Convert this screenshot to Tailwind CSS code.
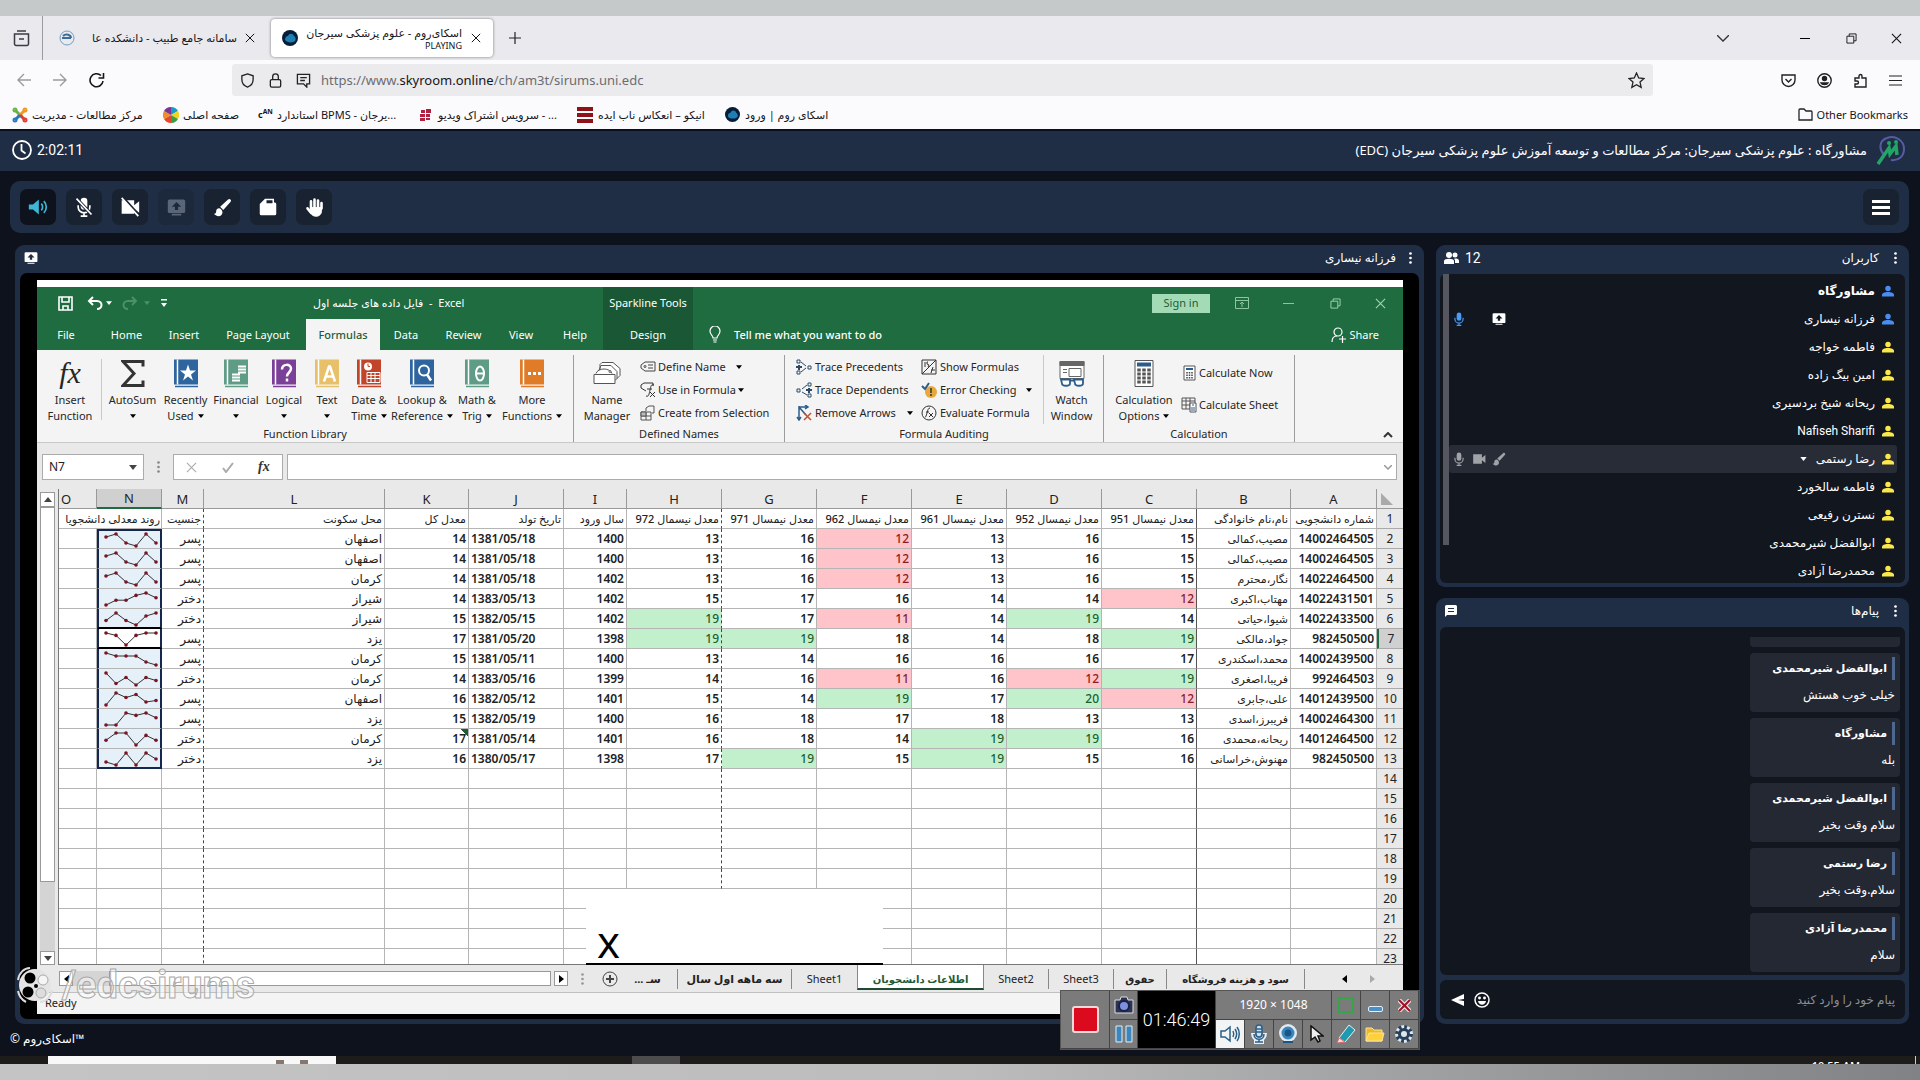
<!DOCTYPE html>
<html lang="fa">

<head>
    <meta charset="UTF-8">
    <meta name="viewport" content="width=device-width, initial-scale=1.0">
    <title>اسکای‌روم - علوم پزشکی سیرجان</title>
    <script src="https://cdn.jsdelivr.net/npm/@tailwindcss/browser@4"></script>
</head>

<body class="h-screen flex flex-col overflow-hidden relative bg-[#0e121c] font-['Noto_Sans','DejaVu_Sans',sans-serif] text-[12px] leading-4">
    <!-- shared icons -->
    <svg class="hidden">
        <symbol id="i-user" viewBox="0 0 24 24"><circle cx="12" cy="7" r="5.500" /><path d="M0 23v-3c0-4 5-6 12-6s12 2 12 6v3z" /></symbol>
        <symbol id="i-mic" viewBox="0 0 24 24"><rect x="8" y="1" width="8" height="14" rx="4" /><path d="M5 10v2a7 7 0 0 0 14 0v-2M12 19v4M8 23h8" fill="none" stroke="currentColor" stroke-width="2" /></symbol>
        <symbol id="i-brush" viewBox="0 0 24 24"><path d="M22 2c-1-1-2-1-3 0L9 11l4 4 9-10c1-1 1-2 0-3zM8 13c-3 0-4 2-4 4s-1 3-3 3c2 2 4 3 6 3 3 0 5-2 5-5 0-2-2-5-4-5z" /></symbol>
        <symbol id="i-cam" viewBox="0 0 24 24"><path d="M2 4h15v6l6-5v14l-6-5v6H2z" /></symbol>
        <symbol id="i-screen" viewBox="0 0 24 24"><path fill-rule="evenodd" d="M3 2h18a2 2 0 0 1 2 2v13a2 2 0 0 1-2 2H3a2 2 0 0 1-2-2V4a2 2 0 0 1 2-2zm9 3-6 6h4v4h4v-4h4zM6 20h12v2H6z" /></symbol>
        <symbol id="i-dots" viewBox="0 0 6 16"><circle cx="3" cy="2" r="1.800" /><circle cx="3" cy="8" r="1.800" /><circle cx="3" cy="14" r="1.800" /></symbol>
        <symbol id="i-down" viewBox="0 0 8 5"><path d="M0 0h8L4 5z" /></symbol>
        <symbol id="i-x" viewBox="0 0 12 12"><path d="M1 1l10 10M11 1L1 11" stroke="currentColor" fill="none" stroke-width="1.2" /></symbol>
        <symbol id="i-restore" viewBox="0 0 12 12"><path d="M1 3.500h7.500V11H1zM3.500 3.500V1H11v7.500H8.500" stroke="currentColor" fill="none" /></symbol>
        <symbol id="i-sky" viewBox="0 0 16 16"><circle cx="8" cy="8" r="8" fill="#061d38" /><path d="M3 10c0-2 1-4 3-4 1-3 5-3 6 0 2 1 2 4 1 5-2 2-8 2-10-1z" fill="#1f7fb5" /></symbol>
    </svg>

    <div class="h-4 shrink-0 bg-[#c5c9ca]"></div>

    <!-- browser tabs -->
    <div class="h-11 shrink-0 bg-[#eae9ed] flex items-center text-[#15141a]">
        <button class="w-[43px] h-full border-r border-[#9a9aa0] grid place-items-center" aria-label="Firefox View">
            <svg class="size-[17px]" viewBox="0 0 17 17" fill="none" stroke="#3b3b44" stroke-width="1.500"><path d="M4 1h9M1.500 4h14v10a1.500 1.500 0 0 1-1.500 1.500H3A1.500 1.500 0 0 1 1.500 14zM6 9h5" /></svg>
        </button>
        <div class="w-[228px] pl-4 pr-[14px] flex items-center gap-[6px]">
            <svg class="size-4 shrink-0" viewBox="0 0 16 16" fill="none" stroke="#6f9fc4"><circle cx="8" cy="8" r="7" /><path d="M3 8h9M4 6c3-3 8-1 8 2" stroke="#3a6d99" stroke-width="2" /></svg>
            <div dir="rtl" class="flex-1 overflow-hidden whitespace-nowrap text-[11px]">سامانه جامع طبیب - دانشکده عا</div>
            <button aria-label="Close tab" class="px-[2px]"><svg class="size-[10px]"><use href="#i-x" /></svg></button>
        </div>
        <div class="w-[222px] h-[38px] pl-[11px] pr-[10px] flex items-center gap-[7px] bg-white rounded-[4px] shadow-[0_0_3px_rgba(0,0,0,0.5)]">
            <svg class="size-4 shrink-0"><use href="#i-sky" /></svg>
            <div class="flex-1 overflow-hidden whitespace-nowrap text-right">
                <div dir="rtl" class="text-[11px] leading-[15px]">اسکای‌روم - علوم پزشکی سیرجان</div>
                <div class="text-[9px] leading-[11px]">PLAYING</div>
            </div>
            <button aria-label="Close tab" class="px-[2px]"><svg class="size-[10px]"><use href="#i-x" /></svg></button>
        </div>
        <button class="ml-4 size-3" aria-label="New tab"><svg viewBox="0 0 12 12" stroke="#222" stroke-width="1.200"><path d="M6 0v12M0 6h12" /></svg></button>
        <div class="ml-auto flex items-center pr-[18px]">
            <button class="mr-[71px]" aria-label="List tabs"><svg class="w-3 h-[7px]" viewBox="0 0 12 7" fill="none" stroke="#333" stroke-width="1.300"><path d="M0 0l6 6 6-6" /></svg></button>
            <button class="w-[10px] h-px bg-black mr-[36px]" aria-label="Minimize"></button>
            <button class="mr-[34px]" aria-label="Restore"><svg class="size-[11px]"><use href="#i-restore" /></svg></button>
            <button aria-label="Close"><svg class="size-[11px]"><use href="#i-x" /></svg></button>
        </div>
    </div>

    <!-- address bar -->
    <div class="h-10 shrink-0 bg-[#fbfbfe] flex items-center text-[#15141a]">
        <div class="w-[232px] pl-[17px] flex items-center gap-[22px]">
            <svg class="size-[14px]" viewBox="0 0 14 14" fill="none" stroke="#9a9aa0" stroke-width="1.400"><path d="M14 7H1M7 1L1 7l6 6" /></svg>
            <svg class="size-[14px]" viewBox="0 0 14 14" fill="none" stroke="#9a9aa0" stroke-width="1.400"><path d="M0 7h13M7 1l6 6-6 6" /></svg>
            <svg class="size-4" viewBox="0 0 16 16" fill="none" stroke="#15141a" stroke-width="1.600"><path d="M14 9a6.500 6.500 0 1 1-2-5.500M14.500 1v5h-5" /></svg>
        </div>
        <div class="flex-1 h-8 bg-[#ebebed] rounded-[3px] flex items-center px-2">
            <svg class="size-[15px] mr-[13px]" viewBox="0 0 15 16" fill="none" stroke="#222" stroke-width="1.400"><path d="M7.500 1L13.500 3v4c0 4-3 7-6 8-3-1-6-4-6-8V3z" /></svg>
            <svg class="size-[15px] mr-[13px]" viewBox="0 0 15 16" fill="none" stroke="#222" stroke-width="1.400"><rect x="2" y="7" width="11" height="8" rx="1.500" /><path d="M4.500 7V4a3 3 0 0 1 6 0v3" /></svg>
            <svg class="size-[15px] mr-[10px]" viewBox="0 0 15 16" fill="none" stroke="#222" stroke-width="1.400"><path d="M1 1.500h13v10H11V15l-3.500-3.500H1zM4 5h7M4 8h5" /></svg>
            <div class="text-[13px] text-[#6b6b73]">https://www.<span class="text-[#15141a]">skyroom.online</span>/ch/am3t/sirums.uni.edc</div>
            <svg class="size-[17px] ml-auto" viewBox="0 0 17 17" fill="none" stroke="#222" stroke-width="1.300"><path d="M8.500 1l2.200 4.900 5.300.6-4 3.600 1.200 5.300-4.700-2.700-4.700 2.700L5 10.100 1 6.500l5.300-.6z" /></svg>
        </div>
        <div class="w-[267px] flex items-center justify-end gap-[21px] pr-[18px]">
            <svg class="size-[15px]" viewBox="0 0 15 15" fill="none" stroke="#222" stroke-width="1.400"><path d="M1 2h13v5a6.500 6.500 0 0 1-13 0zM4.500 6l3 3 3-3" /></svg>
            <svg class="size-[15px]" viewBox="0 0 15 15" fill="none" stroke="#222" stroke-width="1.400"><circle cx="7.500" cy="7.500" r="6.700" /><circle cx="7.500" cy="5.500" r="2" fill="#222" /><path d="M4 10h7c-1 2-6 2-7 0z" fill="#222" /></svg>
            <svg class="size-[15px]" viewBox="0 0 15 15" fill="none" stroke="#222" stroke-width="1.400"><path d="M2 5h4V3a1.500 1.500 0 0 1 3 0v2h4v9H2v-3h2a1.500 1.500 0 0 0 0-3H2z" /></svg>
            <svg class="w-[13px] h-[11px]" viewBox="0 0 13 11" stroke="#222" stroke-width="1.200"><path d="M0 1h13M0 5.500h13M0 10h13" /></svg>
        </div>
    </div>

    <!-- bookmarks -->
    <nav class="h-[29px] shrink-0 bg-[#fbfbfe] flex items-center px-3 text-[11px] whitespace-nowrap text-[#15141a]">
        <a href="#" class="w-[151px] flex items-center gap-1">
            <svg class="size-4 shrink-0" viewBox="0 0 16 16" fill="none" stroke-width="3"><path d="M3 3l7 7" stroke="#6ab344" /><path d="M13 3l-7 7" stroke="#f09a24" /><path d="M8 8l5 5" stroke="#e0402c" /><path d="M8 8l-5 5" stroke="#2a78c0" /><circle cx="3" cy="3" r="1" stroke="#6ab344" /><circle cx="13" cy="3" r="1" stroke="#f09a24" /><circle cx="13" cy="13" r="1" stroke="#e0402c" /><circle cx="3" cy="13" r="1" stroke="#2a78c0" /></svg>
            <span dir="rtl">مرکز مطالعات - مدیریت</span></a>
        <a href="#" class="w-[95px] flex items-center gap-1">
            <svg class="size-4 shrink-0" viewBox="0 0 16 16"><path d="M8 8V0a8 8 0 0 1 7 4z" fill="#1c9ac4" /><path d="M8 8l7-4a8 8 0 0 1 0 8z" fill="#f2d31b" /><path d="M8 8l7 4a8 8 0 0 1-7 4z" fill="#36a046" /><path d="M8 8v8a8 8 0 0 1-7-4z" fill="#e8452c" /><path d="M8 8l-7 4a8 8 0 0 1 0-8z" fill="#ef8f2a" /><path d="M8 8L1 4a8 8 0 0 1 7-4z" fill="#7a3594" /></svg>
            <span dir="rtl">صفحه اصلی</span></a>
        <a href="#" class="w-[162px] flex items-center gap-1">
            <span class="font-bold text-[9px] leading-3 w-[15px]">c<sup>AN</sup></span>
            <span dir="rtl">...یرجان - BPMS استاندارد</span></a>
        <a href="#" class="w-[157px] flex items-center gap-[7px]">
            <svg class="w-[11px] h-3 shrink-0" viewBox="0 0 11 12" fill="#b3203f"><path d="M1 1h4v3H1zM6 0h5v4H6zM0 5h5v3H0zM6 5h4v3H6zM0 9h5v3H0zM6 9h4v2H6z" /></svg>
            <span dir="rtl">... - سرویس اشتراک ویدیو</span></a>
        <a href="#" class="w-[148px] flex items-center gap-[5px]">
            <svg class="size-4 shrink-0" viewBox="0 0 16 16" fill="#8f1218"><path d="M0 0h16v4H0zM0 6h16v4H0zM0 12h16v4H0z" /></svg>
            <span dir="rtl">انیکو – انعکاس ناب ایده</span></a>
        <a href="#" class="flex items-center gap-[5px]"><svg class="size-[15px]" viewBox="0 0 16 16"><use href="#i-sky" /></svg><span dir="rtl">اسکای روم | ورود</span></a>
        <a href="#" class="ml-auto flex items-center gap-1"><svg class="size-[15px]" viewBox="0 0 15 15" fill="none" stroke="#222" stroke-width="1.300"><path d="M1 3a1 1 0 0 1 1-1h4l2 2h5a1 1 0 0 1 1 1v8H1z" /></svg>Other Bookmarks</a>
    </nav>

    <!-- room header -->
    <header class="h-[42px] shrink-0 bg-[#1f2d45] border-t-2 border-[#0a1020] flex items-center pl-3 pr-[14px] pb-[3px] text-white">
        <svg class="size-5 mr-[5px]" viewBox="0 0 20 20" fill="none" stroke="#fff" stroke-width="1.800"><circle cx="10" cy="10" r="9" /><path d="M9.500 4v6.500l4 3" /></svg>
        <span class="text-[14px] font-['Roboto']">2:02:11</span>
        <h1 dir="rtl" class="ml-auto text-[13px] whitespace-nowrap">مشاورگاه : علوم پزشکی سیرجان: مرکز مطالعات و توسعه آموزش علوم پزشکی سیرجان (EDC)</h1>
        <svg class="size-[30px] ml-[9px]" viewBox="0 0 30 30" fill="none"><path d="M8 20C2 13 4 5 11 3c8-3 17 2 17 11 0 7-5 12-13 11" stroke="#5a5aa5" stroke-width="2" /><path d="M2 29L13 13l1 6 6-8 1 9" stroke="#22a565" stroke-width="3.500" /><circle cx="13" cy="8" r="2" fill="#22a565" /><circle cx="20" cy="7" r="2" fill="#22a565" /></svg>
    </header>

    <!-- tools -->
    <div class="mt-[10px] ml-[10px] mr-[11px] h-[52px] shrink-0 rounded-[10px] bg-[#1f2d45] flex items-center gap-[10px] px-[10px] text-white">
        <button aria-label="Speaker" class="size-9 rounded-[7px] bg-[#0e121c] grid place-items-center"><svg class="size-5" viewBox="0 0 24 24" fill="#3fb6d8"><path d="M1 9v6h5l7 6V3L6 9z" /><path d="M16 8c2 2 2 6 0 8M19 5c4 4 4 10 0 14" fill="none" stroke="#3fb6d8" stroke-width="2" /></svg></button>
        <button aria-label="Microphone" class="size-9 rounded-[7px] bg-[#182231] grid place-items-center"><svg class="size-5" viewBox="0 0 24 24" fill="#fff"><use href="#i-mic" /><path d="M3 2l18 19" stroke="#182231" stroke-width="4" /><path d="M3 2l18 19" stroke="#fff" stroke-width="2" /></svg></button>
        <button aria-label="Webcam" class="size-9 rounded-[7px] bg-[#182231] grid place-items-center"><svg class="size-5" viewBox="0 0 24 24" fill="#fff"><use href="#i-cam" /><path d="M4 1l19 21" stroke="#182231" stroke-width="3" /><path d="M2 1l20 22" stroke="#fff" stroke-width="2" /></svg></button>
        <button aria-label="Share screen" class="size-9 rounded-[7px] bg-[#1c283b] grid place-items-center"><svg class="size-[19px]" fill="#5a6577"><use href="#i-screen" /></svg></button>
        <button aria-label="Whiteboard" class="size-9 rounded-[7px] bg-[#182231] grid place-items-center"><svg class="size-[19px]" fill="#fff"><use href="#i-brush" /></svg></button>
        <button aria-label="Files" class="size-9 rounded-[7px] bg-[#182231] grid place-items-center"><svg class="size-[18px]" viewBox="0 0 24 24" fill="#fff"><path fill-rule="evenodd" d="M8 1h12v5h1a2 2 0 0 1 2 2v13a2 2 0 0 1-2 2H3a2 2 0 0 1-2-2V8zm2 2v4h8V3z" /></svg></button>
        <button aria-label="Raise hand" class="size-9 rounded-[7px] bg-[#182231] grid place-items-center"><svg class="size-[21px]" viewBox="0 0 24 24" fill="none" stroke="#fff" stroke-width="3" stroke-linecap="round"><path d="M8 13V5M12 12V3M16 12V4M20 13V7M4 13l4 5" /><path d="M8 12h12v4c0 7-9 8-12 3z" fill="#fff" stroke-width="1" /></svg></button>
        <button aria-label="Menu" class="size-9 ml-auto rounded-[7px] bg-[#182231] grid place-items-center"><svg class="w-[18px] h-[15px]" viewBox="0 0 18 15" fill="#fff"><path d="M0 0h18v3H0zM0 6h18v3H0zM0 12h18v3H0z" /></svg></button>
    </div>

    <main class="mt-3 ml-[15px] mr-[11px] flex-1 min-h-0 flex gap-3">
        <!-- shared screen -->
        <section class="flex-1 min-w-0 flex flex-col bg-[#1f2d45] rounded-[9px] px-[5px] pb-[5px]">
            <div class="h-7 shrink-0 flex items-center pl-1 pr-[6px] pb-[3px] text-white">
                <svg class="size-[14px]" fill="#fff"><use href="#i-screen" /></svg>
                <span dir="rtl" class="ml-auto mr-3">فرزانه نیساری</span>
                <svg class="w-[5px] h-3" fill="#fff"><use href="#i-dots" /></svg>
            </div>
            <div class="flex-1 min-h-0 bg-black rounded-[7px] pt-[7px] pb-[5px] pl-[17px] pr-4">
                <div class="h-full flex flex-col bg-[#e9e9e9] text-[#222]">
                    <div class="h-[7px] shrink-0 bg-white"></div>
                    <!-- excel title -->
                    <div class="h-[63px] shrink-0 bg-[#1e6c40] text-white relative flex flex-col text-[11px]">
                        <div class="h-8 flex items-center pl-[21px] pr-[17px]">
                            <svg class="size-[15px] mr-[14px] shrink-0" viewBox="0 0 15 15" fill="none" stroke="#fff" stroke-width="1.600"><path d="M1 1h13v13H1zM4 1v5h7V1M5 14v-4h5v4" /></svg>
                            <svg class="w-4 h-[14px] mr-[3px]" viewBox="0 0 16 14" fill="none" stroke="#fff" stroke-width="2"><path d="M2 5h8c6 0 6 8 0 8M6 1L2 5l4 4" /></svg>
                            <svg class="w-[6px] h-1 mr-[10px]" fill="#fff" viewBox="0 0 8 5"><path d="M0 0h8L4 5z" /></svg>
                            <svg class="w-4 h-[14px] mr-[6px]" viewBox="0 0 16 14" fill="none" stroke="#4d9069" stroke-width="2"><path d="M14 5H6c-6 0-6 8 0 8M10 1l4 4-4 4" /></svg>
                            <svg class="w-[6px] h-1 mr-[11px]" fill="#4d9069" viewBox="0 0 8 5"><path d="M0 0h8L4 5z" /></svg>
                            <svg class="w-[6px] h-2" fill="#fff" viewBox="0 0 6 8"><path d="M0 0h6v1.500H0zM0 4h6L3 8z" /></svg>
                            <div class="w-[436px] pl-[146px] whitespace-nowrap"><bdi dir="rtl">فایل داده های جلسه اول</bdi>&nbsp; - &nbsp;Excel</div>
                            <div class="w-[90px] text-center whitespace-nowrap relative z-10">Sparkline Tools</div>
                            <button class="ml-auto w-[58px] h-[19px] bg-[#a3dbb7] text-[#1e5c38]">Sign in</button>
                            <svg class="w-[14px] h-3 ml-[25px]" viewBox="0 0 14 12" fill="none" stroke="#8fc4a3"><path d="M.5.500h13v11H.5zM0 3.500h14M7 10V5M5 7l2-2 2 2" /></svg>
                            <span class="w-[11px] h-px bg-[#8fc4a3] ml-[34px]"></span>
                            <svg class="size-[11px] ml-[36px] text-[#a5d3b6]"><use href="#i-restore" /></svg>
                            <svg class="size-[11px] ml-[34px] text-[#a5d3b6]"><use href="#i-x" /></svg>
                        </div>
                        <div class="flex-1 flex items-stretch relative z-10 whitespace-nowrap text-center">
                            <button class="w-[58px]">File</button>
                            <button class="w-[63px]">Home</button>
                            <button class="w-[52px]">Insert</button>
                            <button class="w-[96px]">Page Layout</button>
                            <button class="w-[74px] bg-[#f4f4f4] text-[#1e5c38] font-medium">Formulas</button>
                            <button class="w-[52px]">Data</button>
                            <button class="w-[63px]">Review</button>
                            <button class="w-[52px]">View</button>
                            <button class="w-[56px]">Help</button>
                            <button class="w-[90px]">Design</button>
                            <label class="flex items-center pl-4 gap-[13px] font-medium">
                                <svg class="w-3 h-[17px]" viewBox="0 0 12 17" fill="none" stroke="#fff" stroke-width="1.200"><path d="M4 12c0-3-3-3-3-7a5 5 0 0 1 10 0c0 4-3 4-3 7zM4 14h4M4.500 16h3" /></svg>Tell me what you want to do</label>
                            <button class="ml-auto mr-6 flex items-center gap-[3px]"><svg class="w-[15px] h-4" viewBox="0 0 15 16" fill="none" stroke="#fff" stroke-width="1.200"><circle cx="7" cy="5" r="4" /><path d="M1 15c0-4 2-6 5-6M8 12h7M11.500 9v7" /></svg>Share</button>
                        </div>
                        <div class="absolute left-[566px] top-0 w-[90px] h-full bg-[#1a5835]"></div>
                    </div>

                    <!-- ribbon -->
                    <div class="h-[93px] shrink-0 bg-[#f4f4f4] border-b border-[#c9c9c9] flex pt-[5px] text-[11px] text-center whitespace-nowrap text-[#262626] relative">
                        <div class="w-[537px] border-r border-[#9d9d9d] flex flex-col">
                            <div class="flex" id="library"></div>
                            <div class="mt-auto">Function Library</div>
                        </div>
                        <div class="w-[211px] border-r border-[#9d9d9d] flex flex-col">
                            <div class="flex">
                                <button class="w-[66px] flex flex-col items-center"><svg class="w-7 h-[29px] my-1" viewBox="0 0 28 28" fill="#fff" stroke="#555"><path d="M7 12V5l2-2h11l7 6v7l-5 5M5 13l3-7h10l6 6v7" /><path d="M3 14c2-6 14-6 16 0" /><path d="M1 15h21v9H1z" /><circle cx="17" cy="12" r="1" /></svg>Name<br>Manager</button>
                                <div class="text-left flex flex-col">
                                    <button class="h-[23px] flex items-center gap-[2px]"><svg class="size-4" viewBox="0 0 16 16" fill="none" stroke="#444"><path d="M5 3h10v9H5L1 9V6zM8 6h5M8 9h5" /><circle cx="5" cy="7.500" r="1" /></svg>Define Name<svg class="w-[6px] h-1 ml-2"><use href="#i-down" /></svg></button>
                                    <button class="h-[23px] flex items-center gap-[2px]"><svg class="size-4" viewBox="0 0 16 16" fill="none" stroke="#333"><path d="M6 9L1 6V3l3-2h9v3M14 3c-3-1-3 1-4 5s-1 7-4 6M7 7h5M10 10l5 5M15 10l-5 5" /></svg>Use in Formula<svg class="w-[6px] h-1"><use href="#i-down" /></svg></button>
                                    <button class="h-[23px] flex items-center gap-[2px]"><svg class="size-4" viewBox="0 0 16 16" fill="none" stroke="#555"><path d="M1 7h10v8H1zM1 11h10M6 7v8M6 6V3l3-2h5v7h-2" /><path d="M1 7h5v4H1z" fill="#bbb" /></svg>Create from Selection</button>
                                </div>
                            </div>
                            <div class="mt-auto">Defined Names</div>
                        </div>
                        <div class="w-[319px] border-r border-[#9d9d9d] flex flex-col">
                            <div class="flex">
                                <div class="w-[134px] pl-[11px] flex flex-col">
                                    <button class="h-[23px] flex items-center gap-[3px]"><svg class="size-4" viewBox="0 0 16 16" fill="none" stroke="#2c4a66"><path d="M1 1h3v3H1zM1 12h3v3H1zM12 7h3v3h-3zM5 3l5 4M5 13l5-4" /><path d="M0 8h6M3 6v5" stroke-width="2" /></svg>Trace Precedents</button>
                                    <button class="h-[23px] flex items-center gap-[3px]"><svg class="size-4" viewBox="0 0 16 16" fill="none" stroke="#2c4a66"><path d="M12 1h3v3h-3zM12 12h3v3h-3zM1 7h3v3H1zM6 7l5-4M6 10l5 3" /><path d="M10 8h6M13 6v5" stroke-width="2" /></svg>Trace Dependents</button>
                                    <button class="h-[23px] flex items-center gap-[3px]"><svg class="size-4" viewBox="0 0 16 16" fill="none" stroke="#2a5d8c" stroke-width="1.500"><path d="M3 1v13M1 12l2 3 2-3M3 2h9M9 0l3 2-3 2M3 2l7 8" /><path d="M8 8l7 7M15 8l-7 7" stroke="#c2502c" /></svg>Remove Arrows<svg class="w-[6px] h-1 ml-2"><use href="#i-down" /></svg></button>
                                </div>
                                <div class="w-[124px] pl-[2px] flex flex-col">
                                    <button class="h-[23px] flex items-center gap-[3px]"><svg class="size-4" viewBox="0 0 16 16" fill="none" stroke="#333"><path d="M1 1h14v14H1zM15 1L1 15M4 3v5M7 3H6v2l2 1-1 2M12 8l-2 6M10 11h4" /></svg>Show Formulas</button>
                                    <button class="h-[23px] flex items-center gap-[3px]"><svg class="size-4" viewBox="0 0 16 16"><circle cx="10" cy="10" r="6" fill="#e8a93a" /><path d="M10 6v5M10 12v2" stroke="#333" stroke-width="1.500" /><path d="M1 4l3 3 4-6" fill="none" stroke="#2a5d8c" stroke-width="2" /></svg>Error Checking<svg class="w-[6px] h-1 ml-[6px]"><use href="#i-down" /></svg></button>
                                    <button class="h-[23px] flex items-center gap-[3px]"><svg class="size-4" viewBox="0 0 16 16" fill="none" stroke="#333"><circle cx="8" cy="8" r="7" /><path d="M9 3c-2 0-2 2-3 5s-1 4-2 4M5 7h3M8 8l4 4M12 8l-4 4" /></svg>Evaluate Formula</button>
                                </div>
                                <button class="w-[56px] border-l border-[#c9c9c9] flex flex-col items-center"><svg class="w-7 h-[29px] my-1" viewBox="0 0 28 28" fill="none" stroke="#666"><path d="M2 2h24v17H2z" fill="#fff" /><path d="M2 2h24v4H2z" fill="#666" /><path d="M11 9h12v8H11zM5 10h4M5 13h4" /><path d="M3 20h9v4c0 3-8 3-8 0zM16 20h9v4c0 3-8 3-8 0zM12 21h4" stroke="#2a5d8c" stroke-width="1.800" fill="#fff" /></svg>Watch<br>Window</button>
                            </div>
                            <div class="mt-auto">Formula Auditing</div>
                        </div>
                        <div class="w-[191px] border-r border-[#9d9d9d] flex flex-col">
                            <div class="flex">
                                <button class="w-[77px] pl-[3px] flex flex-col items-center"><svg class="w-5 h-[29px] my-1" viewBox="0 0 20 28"><path d="M1 1h18v26H1z" fill="#fff" stroke="#555" /><path d="M3 3h14v4H3z" fill="#2a5d8c" /><path d="M5 9v15M10 9v15M15 9v15" stroke="#555" stroke-width="3.500" stroke-dasharray="3 1" /></svg>Calculation<span class="flex items-center gap-1">Options<svg class="w-[6px] h-1"><use href="#i-down" /></svg></span></button>
                                <div class="flex flex-col pt-[6px] gap-2">
                                    <button class="h-6 flex items-center gap-[2px]"><svg class="size-4" viewBox="0 0 16 16"><path d="M3 1h11v14H3z" fill="#fff" stroke="#555" /><path d="M5 3h7v2H5z" fill="#2a5d8c" /><path d="M6 7v7M8.500 7v7M11 7v7" stroke="#444" stroke-width="1.500" stroke-dasharray="1.500 1" /></svg>Calculate Now</button>
                                    <button class="h-6 flex items-center gap-[2px]"><svg class="size-4" viewBox="0 0 16 16" fill="none" stroke="#555"><path d="M1 1h13v11H1zM1 4h13M1 8h13M5 1v11M9 1v11" /><path d="M9 6h6v9H9z" fill="#fff" /><path d="M11 8h2M11 10v4M13 10v4" stroke="#2a5d8c" /></svg>Calculate Sheet</button>
                                </div>
                            </div>
                            <div class="mt-auto">Calculation</div>
                        </div>
                        <button class="ml-auto mr-[10px] mt-auto mb-1" aria-label="Collapse ribbon"><svg class="w-[10px] h-[6px]" viewBox="0 0 10 6" fill="none" stroke="#333" stroke-width="2"><path d="M1 5l4-4 4 4" /></svg></button>
                    </div>

                    <!-- formula bar -->
                    <div class="h-[46px] shrink-0 pt-[11px] pb-[9px] pl-[5px] pr-[6px] flex">
                        <div class="w-[102px] border border-[#ababab] bg-white flex items-center pr-[6px]">
                            <input aria-label="Name Box" value="N7" class="w-0 flex-1 pl-[6px] outline-none"><svg class="w-2 h-[5px]" fill="#444"><use href="#i-down" /></svg>
                        </div>
                        <svg class="w-[5px] h-3 mx-[12px] self-center" fill="#888"><use href="#i-dots" /></svg>
                        <div class="w-[110px] border border-[#ababab] bg-white flex items-center justify-around text-[#aaa]">
                            <svg class="size-[11px]"><use href="#i-x" /></svg>
                            <svg class="size-3" viewBox="0 0 12 12" fill="none" stroke="#aaa" stroke-width="2"><path d="M1 7l3 4 7-9" /></svg>
                            <span class="font-['Liberation_Serif'] italic font-bold text-[14px] text-[#333]">fx</span>
                        </div>
                        <div class="ml-1 flex-1 border border-[#ababab] bg-white flex items-center pr-1">
                            <input aria-label="Formula" class="flex-1 outline-none"><svg class="w-2 h-[5px]" viewBox="0 0 8 5" fill="none" stroke="#999" stroke-width="1.500"><path d="M0 0l4 4 4-4" /></svg>
                        </div>
                    </div>

                    <!-- sheet -->
                    <div class="flex-1 min-h-0 flex relative">
                        <div class="w-[21px] shrink-0 pt-[3px] px-[3px] flex flex-col">
                            <button aria-label="Scroll up" class="h-[15px] border border-[#999] bg-white grid place-items-center"><svg class="w-2 h-[5px]" viewBox="0 0 8 5"><path d="M0 5h8L4 0z" fill="#444" /></svg></button>
                            <div class="flex-[375] bg-white border border-[#999]"></div>
                            <div class="flex-[69] bg-[#d4d4d4]"></div>
                            <button aria-label="Scroll down" class="h-[14px] border border-[#999] bg-white grid place-items-center"><svg class="w-2 h-[5px]" fill="#444"><use href="#i-down" /></svg></button>
                        </div>
                        <div class="flex-1 overflow-hidden border-l border-b border-[#777]">
                            <table class="w-full table-fixed border-separate border-spacing-0 whitespace-nowrap font-semibold">
                                <colgroup>
                                    <col class="w-[38px]"><col class="w-[65px]"><col class="w-[42px]"><col class="w-[181px]"><col class="w-[84px]"><col class="w-[95px]"><col class="w-[63px]">
                                    <col class="w-[95px]"><col class="w-[95px]"><col class="w-[95px]"><col class="w-[95px]"><col class="w-[95px]"><col class="w-[95px]"><col class="w-[94px]"><col class="w-[86px]"><col class="w-[26px]">
                                </colgroup>
                                <thead id="head"></thead>
                                <tbody id="rows"></tbody>
                            </table>
                        </div>
                        <div class="absolute left-[549px] bottom-0 w-[297px] h-[76px] bg-white border-b-2 border-black flex items-end pl-[11px] pb-1 text-[44px] leading-9 text-black font-['Open_Sans']">x</div>
                    </div>

                    <!-- sheet tabs -->
                    <div class="h-[28px] shrink-0 border-b border-[#c0c0c0] flex items-center text-[11px] whitespace-nowrap text-center">
                        <button aria-label="Scroll left" class="ml-[22px] w-[14px] h-[15px] border border-[#999] bg-white grid place-items-center"><svg class="w-[5px] h-2" viewBox="0 0 5 8"><path d="M5 0v8L0 4z" /></svg></button>
                        <div class="w-9 h-[15px] bg-[#d4d4d4]"></div>
                        <div class="w-[442px] h-[15px] bg-white border border-[#999]"></div>
                        <button aria-label="Scroll right" class="ml-[3px] w-[14px] h-[15px] border border-[#999] bg-white grid place-items-center"><svg class="w-[5px] h-2" viewBox="0 0 5 8"><path d="M0 0v8l5-4z" /></svg></button>
                        <svg class="w-[5px] h-3 ml-3 mr-[17px]" fill="#999"><use href="#i-dots" /></svg>
                        <svg class="size-4" viewBox="0 0 16 16" fill="none" stroke="#444"><circle cx="8" cy="8" r="7" /><path d="M8 4v8M4 8h8" stroke-width="2" /></svg>
                        <button class="w-[60px] h-[20px] border-r border-[#888] font-bold">... سـ</button>
                        <button class="w-[114px] h-[20px] border-r border-[#888] font-semibold">سه ماهه اول سال</button>
                        <button class="w-[65px] h-[20px]">Sheet1</button>
                        <button class="w-[127px] h-[25px] pt-1 self-start bg-white border-x border-b-2 border-b-[#1e4a34] border-x-[#888] font-bold text-[10px] text-[#1e5c38]">اطلاعات دانشجویان</button>
                        <button class="w-[65px] h-[20px] border-r border-[#888]">Sheet2</button>
                        <button class="w-[65px] h-[20px] border-r border-[#888]">Sheet3</button>
                        <button class="w-[53px] h-[20px] border-r border-[#888] font-bold text-[10px]">حقوق</button>
                        <button class="w-[138px] h-[20px] border-r border-[#888] font-bold text-[10px]">سود و هزینه فروشگاه</button>
                        <svg class="w-[5px] h-2 ml-[37px]" viewBox="0 0 5 8"><path d="M5 0v8L0 4z" /></svg>
                        <svg class="w-[5px] h-2 ml-[23px]" viewBox="0 0 5 8" fill="#aaa"><path d="M0 0v8l5-4z" /></svg>
                    </div>
                    <div class="h-[21px] shrink-0 bg-[#f4f4f4] pl-2 text-[11px] leading-[19px]">Ready</div>
                </div>
            </div>
        </section>

        <aside class="w-[473px] flex flex-col gap-[11px] text-white">
            <!-- users -->
            <section class="h-[342px] flex flex-col bg-[#1f2d45] rounded-[9px] px-1 pb-1">
                <div class="h-[29px] shrink-0 flex items-center pl-1 pr-[7px] pb-1">
                    <svg class="w-[15px] h-3 mr-[6px]" viewBox="0 0 15 12" fill="#fff"><circle cx="5" cy="3" r="3" /><circle cx="11" cy="3" r="2.500" /><path d="M0 12V9c0-3 10-3 10 0v3zM11 11V8l-1-1c3-1 5 0 5 2v2z" /></svg>
                    <span class="text-[14px] font-['Roboto']">12</span>
                    <h2 dir="rtl" class="ml-auto mr-[14px]">کاربران</h2>
                    <svg class="w-[5px] h-3" fill="#fff"><use href="#i-dots" /></svg>
                </div>
                <div class="flex-1 min-h-0 bg-[#11161f] rounded-[6px] flex pl-[3px] pr-2">
                    <div class="w-[6px] h-[271px] bg-[#55565f]"></div>
                    <ul id="users" class="flex-1 pt-[3px]"></ul>
                </div>
            </section>
            <!-- messages -->
            <section class="flex-1 min-h-0 flex flex-col bg-[#1f2d45] rounded-[9px] px-1 pb-[5px]">
                <div class="h-[29px] shrink-0 flex items-center pl-[5px] pr-[7px] pb-1">
                    <svg class="size-3" viewBox="0 0 12 12" fill="#fff"><path fill-rule="evenodd" d="M1.500 0h9A1.500 1.500 0 0 1 12 1.500v7A1.500 1.500 0 0 1 10.500 10H2L0 12V1.500A1.500 1.500 0 0 1 1.500 0zM3 3v1h6V3zm0 3v1h6V6z" /></svg>
                    <h2 dir="rtl" class="ml-auto mr-[14px]">پیام‌ها</h2>
                    <svg class="w-[5px] h-3" fill="#fff"><use href="#i-dots" /></svg>
                </div>
                <div class="flex-1 min-h-0 bg-[#11161f] rounded-[6px] flex flex-col items-end gap-[6px] pt-[10px] pr-[5px]" id="messages">
                    <div class="w-[150px] h-[10px] bg-[#242833] rounded-b-[4px]"></div>
                </div>
                <div dir="rtl" class="mt-[5px] h-[39px] shrink-0 bg-[#11161f] rounded-[6px] flex items-center pr-[10px] pl-[11px] gap-[10px]">
                    <input aria-label="پیام" placeholder="پیام خود را وارد کنید" class="flex-1 outline-none placeholder:text-[#8b8f98]">
                    <button aria-label="Emoji"><svg class="size-4" viewBox="0 0 16 16" fill="none" stroke="#fff" stroke-width="1.500"><circle cx="8" cy="8" r="7" /><path d="M4 9c1 5 7 5 8 0z" fill="#fff" stroke="none" /><circle cx="5.500" cy="6" r=".7" fill="#fff" /><circle cx="10.500" cy="6" r=".7" fill="#fff" /></svg></button>
                    <button aria-label="Send"><svg class="w-[13px] h-3" viewBox="0 0 13 12" fill="#fff"><path d="M13 0v5L7 6l6 1v5L0 6z" /></svg></button>
                </div>
            </section>
        </aside>
    </main>

    <footer dir="rtl" class="h-8 shrink-0 pt-[7px] pl-[10px] text-left text-white">™اسکای‌روم ©</footer>

    <!-- taskbar -->
    <div class="h-2 shrink-0 bg-[#1d1c1b] flex overflow-hidden text-white">
        <div class="ml-12 w-[288px] bg-[#f8f8f8] flex justify-end gap-4 pr-7 pt-1"><span class="w-2 bg-[#85776f]"></span><span class="w-2 bg-[#85776f]"></span></div>
        <div class="ml-[296px] w-12 bg-[#4c4c4c]"></div>
        <div class="ml-auto mr-[55px] pt-[2px] text-[11px] font-medium">10:55 AM</div>
        <div class="w-px mr-1 bg-[#ccc]"></div>
    </div>
    <div class="h-4 shrink-0 bg-linear-to-r from-[#c4c4c4] via-[#bcbcbc] to-[#808285]"></div>

    <!-- watermark -->
    <div class="absolute left-4 bottom-[75px] flex items-center gap-2">
        <svg class="w-[38px] h-[38px]" viewBox="0 0 38 38"><path d="M2 14C3 7 8 2 14 2M36 24c-1 7-6 12-12 12M2 25c1 5 4 9 8 11" fill="none" stroke="#ddd" stroke-width="2" /><circle cx="19" cy="19" r="16" fill="#e4e4e4" /><circle cx="14" cy="12" r="5.500" fill="#000" /><circle cx="12" cy="26" r="5.500" fill="#000" /><circle cx="27" cy="14" r="5" fill="#f5f5f5" stroke="#aaa" /><circle cx="25" cy="27" r="5" fill="#ddd" stroke="#aaa" /><circle cx="20" cy="20" r="2" fill="#000" /></svg>
        <span class="text-[38px] leading-10 font-bold font-['Liberation_Sans_Narrow','Roboto'] text-white/50 [-webkit-text-stroke:1px_#aaa]">/edcsirums</span>
    </div>

    <!-- screen recorder -->
    <div class="absolute right-[500px] bottom-[30px] h-[60px] border border-[#555] bg-[#7b7b7b] grid grid-cols-[49px_28px_78px_repeat(7,29px)] grid-rows-[29px_29px] text-white *:grid *:place-items-center *:border-r *:border-b *:border-[#444]">
        <button class="row-span-2" aria-label="Stop"><span class="size-[27px] bg-[#dc0a1e] border-2 border-[#f0dada] rounded-[3px]"></span></button>
        <button aria-label="Snapshot"><svg class="size-5" viewBox="0 0 20 20"><path d="M1 5h5l1-3h6l1 3h5v13H1z" fill="#2b3354" stroke="#ddd" /><circle cx="10" cy="11" r="5" fill="#7d8fe0" stroke="#1a2040" stroke-width="2" /></svg></button>
        <div class="row-span-2 bg-black text-[18px] font-['Roboto'] font-light">01:46:49</div>
        <div class="col-span-4 text-[12px]">1920 × 1048</div>
        <button aria-label="Region"><span class="size-4 border-2 border-[#35a548]"></span></button>
        <button aria-label="Minimize"><span class="mt-2 w-[15px] h-[6px] bg-[#4a90c4] border border-[#e4eef6] rounded-[2px]"></span></button>
        <button aria-label="Close"><svg class="size-[13px]" viewBox="0 0 12 12" stroke="#a01428" stroke-width="2"><path d="M1 1l10 10M11 1L1 11" stroke="#eee" stroke-width="4" /><path d="M1 1l10 10M11 1L1 11" /></svg></button>
        <button class="col-start-2 row-start-2" aria-label="Pause"><svg class="w-[18px] h-[18px]" viewBox="0 0 18 18" fill="#3a87bd" stroke="#e8eef4"><path d="M1 1h6v16H1zM11 1h6v16h-6z" /></svg></button>
        <button class="bg-[#f2f4f6]" aria-label="Sound"><svg class="size-5" viewBox="0 0 20 20" fill="none" stroke="#2b5f88" stroke-width="1.500"><path d="M1 7h4l5-4v14l-5-4H1zM13 7c1 2 1 4 0 6M15 5c2 3 2 7 0 10M17 3c3 4 3 10 0 14" /></svg></button>
        <button aria-label="Mic"><svg class="size-5" viewBox="0 0 20 20" fill="#cfe0ee" stroke="#2b5f88" stroke-width="1.500"><path d="M4 9c0 9 12 9 12 0M10 15v4M5 18h10" fill="none" stroke="#e4eef6" stroke-width="4" /><rect x="7" y="1" width="6" height="12" rx="3" /><path d="M7 5h6M7 8h6M5 10c0 7 10 7 10 0M10 15v3M6 18h8" fill="none" /></svg></button>
        <button aria-label="Webcam"><svg class="size-5" viewBox="0 0 20 20"><circle cx="10" cy="9" r="9" fill="#dfeaf2" /><circle cx="10" cy="9" r="5" fill="#1b5585" stroke="#3a87bd" stroke-width="3" /><path d="M5 18h10" stroke="#1b5585" stroke-width="2" /></svg></button>
        <button aria-label="Cursor"><svg class="w-[14px] h-[18px]" viewBox="0 0 14 18" fill="#eee" stroke="#111" stroke-width="1.500"><path d="M1 1v14l4-3 3 5 2-1-2-5h5z" /></svg></button>
        <button aria-label="Pen"><svg class="size-5" viewBox="0 0 20 20" stroke="#e8f2f4"><path d="M13 1l6 5-10 12-6-4z" fill="#1d9ab0" /><path d="M3 14l6 4-8 1z" fill="#f3e3da" stroke="#d46a6a" /></svg></button>
        <button aria-label="Open folder"><svg class="size-5" viewBox="0 0 20 20" fill="#f0b823" stroke="#f7e3a0"><path d="M1 4h6l2 2h8v11H1z" /><path d="M4 9h15l-2 8H1z" fill="#ffd23c" /></svg></button>
        <button aria-label="Settings"><svg class="size-5" viewBox="0 0 20 20" fill="none"><circle cx="10" cy="10" r="9" fill="#dfe6ec" /><circle cx="10" cy="10" r="7" stroke="#27415a" stroke-width="4" stroke-dasharray="2.700 2.800" /><circle cx="10" cy="10" r="4.500" stroke="#27415a" stroke-width="3" /></svg></button>
    </div>

    <script>
        // function library buttons: width, first line, second line, book colour, glyph
        const books = [
            [49, 'Recently', 'Used', '#2f659f', '<path d="M14 5l2 6h6l-5 4 2 6-5-4-5 4 2-6-5-4h6z" fill="#fff"/>'],
            [52, 'Financial', '', '#5f9c86', '<path d="M14 7h8M14 10h8M14 13h8M8 15h8M8 18h8M8 21h8" stroke="#fff" stroke-width="2"/>'],
            [44, 'Logical', '', '#7b3f98', '<path d="M10 10c0-6 9-6 9-1 0 4-4 4-4 8M15 19v3" fill="none" stroke="#fff" stroke-width="2.500"/>'],
            [42, 'Text', '', '#e8c06a', '<path d="M9 22l5-15h1l5 15M11 17h7" fill="none" stroke="#fff" stroke-width="2.500"/>'],
            [42, 'Date &', 'Time', '#c1452b', '<circle cx="11" cy="7" r="4" fill="#fff"/><path d="M11 4v3h2" stroke="#c1452b" fill="none"/><path d="M10 13h13v10H10zM10 16h13M10 19h13M14 13v10M18 13v10" stroke="#fff" fill="none"/>'],
            [64, 'Lookup &', 'Reference', '#2f659f', '<circle cx="14" cy="11" r="5" stroke="#fff" stroke-width="2" fill="none"/><path d="M17 15l4 6" stroke="#fff" stroke-width="2.500"/>'],
            [46, 'Math &', 'Trig', '#5f9c86', '<ellipse cx="15" cy="14" rx="4" ry="7" stroke="#fff" stroke-width="2" fill="none"/><path d="M11 14h8" stroke="#fff" stroke-width="2"/>'],
            [64, 'More', 'Functions', '#e07b28', '<path d="M8 14h3M13 14h3M18 14h3" stroke="#fff" stroke-width="3"/>']
        ];
        const arrow = '<svg class="w-[6px] h-1"><use href="#i-down"/></svg>';
        let lib = `<button class="w-[64px] flex flex-col items-center pl-[2px]"><span class="h-[37px] leading-[35px] text-[30px] italic font-['Liberation_Serif']">fx</span>Insert<br>Function</button>
            <span class="w-px mr-[2px] my-1 bg-[#c9c9c9]"></span>
            <button class="w-[57px] flex flex-col items-center"><svg class="w-6 h-[29px] my-1" viewBox="0 0 24 28"><path d="M22 7V2H2l11 12L2 26h20v-5" fill="none" stroke="#333" stroke-width="3"/></svg>AutoSum<span class="h-4 flex items-center">${arrow}</span></button>`;
        books.forEach(([w, a, b, color, glyph]) => {
            lib += `<button style="width:${w}px" class="flex flex-col items-center"><svg class="w-6 h-[29px] my-1 overflow-visible" viewBox="0 0 24 28">
                <path d="M0 0h24v25H0z" fill="${color}"/><path d="M3.500 0v25" stroke="#fff" stroke-width="1.500"/><path d="M1 27h23" stroke="${color}" stroke-width="1.500"/>${glyph}</svg>${a}<span class="h-4 flex items-center gap-1">${b}${arrow}</span></button>`;
        });
        document.getElementById('library').innerHTML = lib;

        // student data: id, name, six averages (C..H), entry year, birthday, total, city, gender
        const students = [
            ['14002464505', 'مصیب،کمالی', [15, 16, 13, 12, 16, 13], 1400, '1381/05/18', 14, 'اصفهان', 'پسر'],
            ['14002464505', 'مصیب،کمالی', [15, 16, 13, 12, 16, 13], 1400, '1381/05/18', 14, 'اصفهان', 'پسر'],
            ['14022464500', 'نگار،محترم', [15, 16, 13, 12, 16, 13], 1402, '1381/05/18', 14, 'کرمان', 'پسر'],
            ['14022431501', 'مهتاب،اکبری', [12, 14, 14, 16, 17, 15], 1402, '1383/05/13', 14, 'شیراز', 'دختر'],
            ['14022433500', 'شیوا،حیاتی', [14, 19, 14, 11, 17, 19], 1402, '1382/05/15', 15, 'شیراز', 'دختر'],
            ['982450500', 'جواد،مالکی', [19, 18, 14, 18, 19, 19], 1398, '1381/05/20', 17, 'یزد', 'پسر'],
            ['14002439500', 'محمد،اسکندری', [17, 16, 16, 16, 14, 13], 1400, '1381/05/11', 15, 'کرمان', 'پسر'],
            ['992464503', 'فریبا،اصغری', [19, 12, 16, 11, 16, 14], 1399, '1383/05/16', 14, 'کرمان', 'دختر'],
            ['14012439500', 'علی،جابری', [12, 20, 17, 19, 14, 15], 1401, '1382/05/12', 16, 'اصفهان', 'پسر'],
            ['14002464300', 'فریبرز،اسدی', [13, 13, 18, 17, 18, 16], 1400, '1382/05/19', 15, 'یزد', 'پسر'],
            ['14012464500', 'ریحانه،محمدی', [16, 19, 19, 14, 18, 16], 1401, '1381/05/14', 17, 'کرمان', 'دختر'],
            ['982450500', 'مهنوش،خراسانی', [16, 15, 19, 15, 19, 17], 1398, '1380/05/17', 16, 'یزد', 'دختر']
        ];
        const titles = ['جنسیت', 'محل سکونت', 'معدل کل', 'تاریخ تولد', 'سال ورود', 'معدل نیسمال 972', 'معدل نیمسال 971', 'معدل نیمسال 962', 'معدل نیمسال 961', 'معدل نیمسال 952', 'معدل نیمسال 951', 'نام،نام خانوادگی', 'شماره دانشجویی'];

        function edge(col) {
            if (col === 2 || col === 7) return 'border-r border-dashed border-r-[#444] border-b-[#b5b5b5] [border-bottom-style:solid]';
            if (col === 12) return 'border-r border-r-[#555] border-b-[#b5b5b5]';
            return 'border-r border-[#b5b5b5]';
        }

        function cell(text, col, extra = '') {
            return `<td dir="rtl" class="h-5 px-[2px] border-b overflow-hidden leading-[18px] text-right ${edge(col)} ${extra || 'bg-white'}">${text}</td>`;
        }

        function spark(v) {
            const min = Math.min(...v), max = Math.max(...v);
            const pts = v.map((n, i) => [7 + i * 10, 15 - (n - min) / (max - min) * 12]);
            return `<svg class="w-[63px] h-[19px] block" viewBox="0 0 63 19"><polyline points="${pts.join(' ')}" fill="none" stroke="#333"/>${pts.map(p => `<circle cx="${p[0]}" cy="${p[1]}" r="1.800" fill="#7a1420"/>`).join('')}</svg>`;
        }

        document.getElementById('head').innerHTML = '<tr>' + 'ONMLKJIHGFEDCBA'.split('').map(c =>
            `<th class="h-5 p-0 font-normal text-[13px] leading-[18px] border-r border-b border-[#999] ${c === 'N' ? 'bg-[#d0d0d0] border-b-2 border-b-[#1e6c40]' : ''} ${c === 'O' ? 'text-left pl-[2px]' : ''}">${c}</th>`).join('') +
            '<th class="h-5 p-0 border-b border-[#999]"><svg class="size-3 ml-1" viewBox="0 0 12 12"><path d="M0 0v12h12z" fill="#aaa"/></svg></th></tr>';

        const num = n => `<th class="h-5 px-0 text-center font-normal text-[12px] leading-[18px] border-b border-[#aaa] ${n === 7 ? 'bg-[#d0d0d0] border-l-2 border-l-[#1e6c40]' : ''}">${n}</th>`;
        let html = `<tr><td colspan="2" dir="rtl" class="h-5 px-[1px] overflow-hidden leading-[18px] text-[11px] font-medium bg-white border-b border-r border-[#b5b5b5]">روند معدلی دانشجویا</td>` +
            titles.map((t, i) => cell(t, i + 2, 'bg-white text-[11px] font-medium')).join('') + num(1) + '</tr>';
        students.forEach((s, i) => {
            const [id, name, avg, year, birth, total, city, gender] = s;
            const r = i + 2;
            let box = 'bg-[#e6f0f9] border-b-[#b5b5b5]';
            if (r === 7) box = 'bg-white border-b-2 border-b-black';
            if (r === 6) box = 'bg-[#e6f0f9] border-b-2 border-b-black';
            if (r === 13) box = 'bg-[#e6f0f9] border-b-2 border-b-[#14284f]';
            if (r === 2) box = 'bg-[#e6f0f9] border-t-2 border-t-[#14284f] border-b-[#b5b5b5]';
            html += '<tr>' + cell('', 0) + `<td class="h-5 p-0 border-b border-x-2 border-x-[#14284f] overflow-hidden ${box}"><div class="h-[17px] overflow-hidden">${spark(avg)}</div></td>`;
            html += cell(gender, 2, 'bg-white font-medium') + cell(city, 3, 'bg-white font-medium') + cell(total, 4, r === 12 ? 'bg-[linear-gradient(225deg,#1e5c38_5px,white_5px)]' : '');
            html += cell(birth, 5, 'bg-white !text-left') + cell(year, 6);
            for (let k = 5; k >= 0; k--) {
                const v = avg[k];
                html += cell(v, 12 - k, v <= 12 ? 'bg-[#ffc4ca] text-[#8a1c28] font-medium' : v >= 19 ? 'bg-[#c3f0cc] text-[#1c5f2c] font-medium' : '');
            }
            html += cell(name, 13, 'bg-white text-[11px] font-medium') + cell(id, 14) + num(r) + '</tr>';
        });
        for (let r = 14; r <= 23; r++) {
            html += '<tr>';
            for (let c = 0; c < 15; c++) html += cell('', c);
            html += num(r) + '</tr>';
        }
        document.getElementById('rows').innerHTML = html;

        const users = ['مشاورگاه', 'فرزانه نیساری', 'فاطمه خواجه', 'امین بیگ زاده', 'ریحانه شیخ بردسیری', 'Nafiseh Sharifi', 'رضا رستمی', 'فاطمه سالخورد', 'نسترن رفیعی', 'ابوالفضل شیرمحمدی', 'محمدرضا آزادی'];
        document.getElementById('users').innerHTML = users.map((u, i) => {
            let icons = '';
            if (i === 1) icons = '<svg class="size-[14px] text-[#4a9bf5]" fill="#4a9bf5"><use href="#i-mic"/></svg><svg class="size-[14px] ml-[26px]" fill="#fff"><use href="#i-screen"/></svg>';
            if (i === 6) icons = '<svg class="size-[14px] text-[#a0a2a8]" fill="#a0a2a8"><use href="#i-mic"/></svg><svg class="size-[14px] ml-[6px]" fill="#a0a2a8"><use href="#i-cam"/></svg><svg class="size-[14px] ml-[6px]" fill="#a0a2a8"><use href="#i-brush"/></svg>';
            return `<li class="h-7 flex items-center px-[3px] rounded-[3px] ${i === 6 ? 'bg-[#282c37]' : ''}">${icons}
                <span class="ml-auto flex items-center gap-[9px]">${i === 6 ? '<svg class="w-[7px] h-1" fill="#fff" viewBox="0 0 8 5"><path d="M0 0h8L4 5z"/></svg>' : ''}<bdi class="${i === 0 ? 'font-bold' : ''} ${i === 5 ? 'font-[Roboto]' : ''}">${u}</bdi></span>
                <svg class="size-3 ml-[7px]" fill="${i < 2 ? '#4a8df0' : '#fbe94b'}"><use href="#i-user"/></svg></li>`;
        }).join('');

        const messages = [['ابوالفضل شیرمحمدی', 'خیلی خوب هستش'], ['مشاورگاه', 'بله'], ['ابوالفضل شیرمحمدی', 'سلام وقت بخیر'], ['رضا رستمی', 'سلام.وقت بخیر'], ['محمدرضا آزادی', 'سلام']];
        document.getElementById('messages').innerHTML += messages.map(([who, text]) =>
            `<div dir="rtl" class="w-[150px] h-[59px] shrink-0 bg-[#242833] rounded-[4px] pt-1 pr-[5px]">
                <div class="h-[23px] border-r-[3px] border-[#4d6890] pr-[5px] leading-[22px] font-bold text-[11px] whitespace-nowrap">${who}</div><div class="mt-[7px]">${text}</div></div>`).join('');
    </script>
</body>

</html>
